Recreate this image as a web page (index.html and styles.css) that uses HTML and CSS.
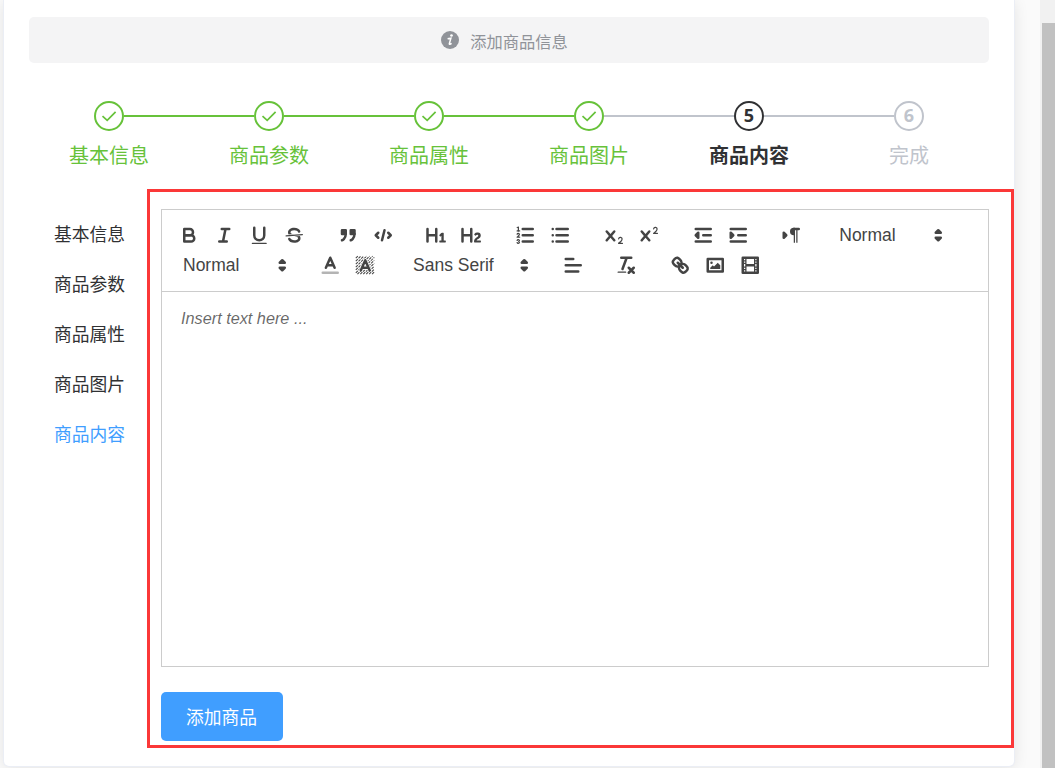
FILE: index.html
```html
<!DOCTYPE html>
<html lang="zh-CN">
<head>
<meta charset="utf-8">
<title>添加商品</title>
<link rel="stylesheet" href="styles.css">
</head>
<body>
<div class="viewport">
<main class="card">
  <div class="alert">
    <svg class="alert-icon" viewBox="0 0 18 18"><circle cx="9" cy="9" r="9" fill="#909399"/><circle cx="10.5" cy="4.5" r="1.35" fill="#fff"/><path d="M6.6 7.7 L9.9 7.1 L8.3 12.9 Q8.2 14 10.6 12.3" fill="none" stroke="#fff" stroke-width="1.5"/></svg>
    <span>添加商品信息</span>
  </div>
  <div class="steps">
    <div class="step done"><div class="head"><span class="circle"><svg viewBox="0 0 16 16"><path d="M1.5 8.1 L6.2 12.4 L14.6 3.8"/></svg></span></div><div class="title">基本信息</div></div>
    <div class="step done"><div class="head"><span class="circle"><svg viewBox="0 0 16 16"><path d="M1.5 8.1 L6.2 12.4 L14.6 3.8"/></svg></span></div><div class="title">商品参数</div></div>
    <div class="step done"><div class="head"><span class="circle"><svg viewBox="0 0 16 16"><path d="M1.5 8.1 L6.2 12.4 L14.6 3.8"/></svg></span></div><div class="title">商品属性</div></div>
    <div class="step done last-done"><div class="head"><span class="circle"><svg viewBox="0 0 16 16"><path d="M1.5 8.1 L6.2 12.4 L14.6 3.8"/></svg></span></div><div class="title">商品图片</div></div>
    <div class="step current"><div class="head"><span class="circle">5</span></div><div class="title">商品内容</div></div>
    <div class="step"><div class="head"><span class="circle">6</span></div><div class="title">完成</div></div>
  </div>
  <div class="body">
    <nav class="tabs">
      <a>基本信息</a><a>商品参数</a><a>商品属性</a><a>商品图片</a><a class="active">商品内容</a>
    </nav>
    <section class="panel">
      <div class="toolbar">
        <div class="group">
          <button><svg class="q" viewBox="0 0 18 18"><path class="s" d="M5,4H9.5A2.5,2.5,0,0,1,12,6.5v0A2.5,2.5,0,0,1,9.5,9H5V4Z"/><path class="s" d="M5,9h5.5A2.5,2.5,0,0,1,13,11.5v0A2.5,2.5,0,0,1,10.5,14H5V9Z"/></svg></button>
          <button><svg class="q" viewBox="0 0 18 18"><path class="s" d="M7 4H13M5 14H11M8 14L10 4"/></svg></button>
          <button><svg class="q" viewBox="0 0 18 18"><path class="s" d="M5,3V9a4.012,4.012,0,0,0,4,4H9a4.012,4.012,0,0,0,4-4V3"/><rect class="f" height="1" rx=".5" width="12" x="3" y="15"/></svg></button>
          <button><svg class="q" viewBox="0 0 18 18"><path class="s t" d="M15.5 8.5L2.5 9.5"/><path class="f" d="M9.007,8C6.542,7.791,6,7.519,6,6.5,6,5.792,7.283,5,9,5c1.571,0,2.765.679,2.969,1.309a1,1,0,0,0,1.9-.617C13.356,4.106,11.354,3,9,3,6.2,3,4,4.538,4,6.5a3.2,3.2,0,0,0,.5,1.843Z"/><path class="f" d="M8.984,10C11.457,10.208,12,10.479,12,11.5c0,0.708-1.283,1.5-3,1.5-1.571,0-2.765-.679-2.969-1.309a1,1,0,1,0-1.9.617C4.644,13.894,6.646,15,9,15c2.8,0,5-1.538,5-3.5a3.2,3.2,0,0,0-.5-1.843Z"/></svg></button>
        </div>
        <div class="group">
          <button><svg class="q" viewBox="0 0 18 18"><rect class="f s" height="3" width="3" x="4" y="5"/><rect class="f s" height="3" width="3" x="11" y="5"/><path class="f s" d="M7,8c0,4.031-3,5-3,5"/><path class="f s" d="M14,8c0,4.031-3,5-3,5"/></svg></button>
          <button><svg class="q" viewBox="0 0 18 18"><path class="s" d="M5 7L3 9L5 11M13 7L15 9L13 11M10 5L8 13"/></svg></button>
        </div>
        <div class="group">
          <button><svg class="q" viewBox="0 0 18 18"><path class="f" d="M10,4V14a1,1,0,0,1-2,0V10H3v4a1,1,0,0,1-2,0V4A1,1,0,0,1,3,4V8H8V4a1,1,0,0,1,2,0Zm6.06787,9.209H14.98975V7.59863a.54085.54085,0,0,0-.605-.60547h-.62744a1.01119,1.01119,0,0,0-.748.29688L11.645,8.56641a.5435.5435,0,0,0-.022.8584l.28613.30762a.53861.53861,0,0,0,.84717.0332l.09912-.08789a1.2137,1.2137,0,0,0,.2417-.35254h.02246s-.01123.30859-.01123.60547V13.209H12.041a.54085.54085,0,0,0-.605.60547v.43945a.54085.54085,0,0,0,.605.60547h4.02686a.54085.54085,0,0,0,.605-.60547v-.43945A.54085.54085,0,0,0,16.06787,13.209Z"/></svg></button>
          <button><svg class="q" viewBox="0 0 18 18"><path class="f" d="M16.73975,13.81445v.43945a.54085.54085,0,0,1-.605.60547H11.855a.58392.58392,0,0,1-.64893-.60547V14.0127c0-2.90527,3.39941-3.42187,3.39941-4.55469a.77675.77675,0,0,0-.84717-.78125,1.17684,1.17684,0,0,0-.83594.38477c-.2749.26367-.561.374-.85791.13184l-.4292-.34082c-.30811-.24219-.38525-.51758-.1543-.81445a2.97155,2.97155,0,0,1,2.45361-1.17676,2.45393,2.45393,0,0,1,2.68408,2.40918c0,2.45312-3.1792,2.92676-3.27832,3.93848h2.79443A.54085.54085,0,0,1,16.73975,13.81445ZM9,3A.99974.99974,0,0,0,8,4V8H3V4A1,1,0,0,0,1,4V14a1,1,0,0,0,2,0V10H8v4a1,1,0,0,0,2,0V4A.99974.99974,0,0,0,9,3Z"/></svg></button>
        </div>
        <div class="group">
          <button><svg class="q" viewBox="0 0 18 18"><path class="s" d="M7 4H15M7 9H15M7 14H15"/><path class="s t" d="M2.5 5.5H4.5"/><path class="f" d="M3.5,6A0.5,0.5,0,0,1,3,5.5V3.085l-0.276.138A0.5,0.5,0,0,1,2.053,3c-0.124-.247-0.023-0.324.224-0.447l1-.5A0.5,0.5,0,0,1,4,2.5v3A0.5,0.5,0,0,1,3.5,6Z"/><path class="s t" d="M4.5,10.5h-2c0-.234,1.85-1.076,1.85-2.234A0.959,0.959,0,0,0,2.5,8.156"/><path class="s t" d="M2.5,14.846a0.959,0.959,0,0,0,1.85-.109A0.7,0.7,0,0,0,3.75,14a0.688,0.688,0,0,0,.6-0.736,0.959,0.959,0,0,0-1.85-.109"/></svg></button>
          <button><svg class="q" viewBox="0 0 18 18"><path class="s" d="M6 4H15M6 9H15M6 14H15M3 4H3M3 9H3M3 14H3"/></svg></button>
        </div>
        <div class="group">
          <button><svg class="q" viewBox="0 0 18 18"><path class="f" d="M15.5,15H13.861a3.858,3.858,0,0,0,1.914-2.975,1.8,1.8,0,0,0-1.6-1.751A1.921,1.921,0,0,0,12.021,11.7a0.50013,0.50013,0,1,0,.957.291h0a0.914,0.914,0,0,1,1.053-.725,0.81,0.81,0,0,1,.744.762c0,1.076-1.16971,1.86982-1.93971,2.43082A1.45639,1.45639,0,0,0,12,15.5a0.5,0.5,0,0,0,.5.5h3A0.5,0.5,0,0,0,15.5,15Z"/><path class="f" d="M9.65,5.241a1,1,0,0,0-1.409.108L6,7.964,3.759,5.349A1,1,0,0,0,2.192,6.59178Q2.21541,6.6213,2.241,6.649L4.684,9.5,2.241,12.35A1,1,0,0,0,3.71,13.70722q0.02557-.02768.049-0.05722L6,11.036,8.241,13.65a1,1,0,1,0,1.567-1.24277Q9.78459,12.3777,9.759,12.35L7.316,9.5,9.759,6.651A1,1,0,0,0,9.65,5.241Z"/></svg></button>
          <button><svg class="q" viewBox="0 0 18 18"><path class="f" d="M15.5,7H13.861a4.015,4.015,0,0,0,1.914-2.975,1.8,1.8,0,0,0-1.6-1.751A1.922,1.922,0,0,0,12.021,3.7a0.5,0.5,0,1,0,.957.291,0.917,0.917,0,0,1,1.053-.725,0.81,0.81,0,0,1,.744.762c0,1.077-1.164,1.925-1.934,2.486A1.423,1.423,0,0,0,12,7.5a0.5,0.5,0,0,0,.5.5h3A0.5,0.5,0,0,0,15.5,7Z"/><path class="f" d="M9.65,5.241a1,1,0,0,0-1.409.108L6,7.964,3.759,5.349A1,1,0,0,0,2.192,6.59178Q2.21541,6.6213,2.241,6.649L4.684,9.5,2.241,12.35A1,1,0,0,0,3.71,13.70722q0.02557-.02768.049-0.05722L6,11.036,8.241,13.65a1,1,0,1,0,1.567-1.24277Q9.78459,12.3777,9.759,12.35L7.316,9.5,9.759,6.651A1,1,0,0,0,9.65,5.241Z"/></svg></button>
        </div>
        <div class="group">
          <button><svg class="q" viewBox="0 0 18 18"><path class="s" d="M3 14H15M3 4H15M9 9H15"/><path class="f s" d="M5 7V11L3 9Z"/></svg></button>
          <button><svg class="q" viewBox="0 0 18 18"><path class="s" d="M3 14H15M3 4H15M9 9H15"/><path class="f s" d="M3 7V11L5 9Z"/></svg></button>
        </div>
        <div class="group">
          <button><svg class="q" viewBox="0 0 18 18"><path class="f s" d="M3 11L5 9L3 7Z"/><path class="s" d="M15 4H11"/><path class="f" d="M11,3a3,3,0,0,0,0,6h1V3H11Z"/><rect class="f" height="11" width="1" x="11" y="4"/><rect class="f" height="11" width="1" x="13" y="4"/></svg></button>
        </div>
        <div class="group">
          <div class="picker"><span>Normal</span><svg class="q" viewBox="0 0 18 18"><path class="f s" d="M7 11L9 13L11 11ZM7 7L9 5L11 7Z"/></svg></div>
        </div>
        <div class="group">
          <div class="picker"><span>Normal</span><svg class="q" viewBox="0 0 18 18"><path class="f s" d="M7 11L9 13L11 11ZM7 7L9 5L11 7Z"/></svg></div>
        </div>
        <div class="group">
          <button><svg class="q" viewBox="0 0 18 18"><path class="s pale" d="M3 15H15"/><path class="s" d="M5.5 11L9 3L12.5 11M11.63 9H6.38"/></svg></button>
          <button><svg class="q" viewBox="0 0 18 18"><path class="hatch" d="M.5 2.5L2.5 .5M.5 5.2L5.2 .5M.5 7.9L7.9 .5M.5 10.6L10.6 .5M.5 13.3L13.3 .5M.5 16L16 .5M2 17.2L17.5 1.7M4.7 17.2L17.5 4.4M7.4 17.2L17.5 7.1M10.1 17.2L17.5 9.8M12.8 17.2L17.5 12.5M15.5 17.2L17.5 15.2" transform="translate(1 1.2) scale(.87)"/><path class="halo" d="M5.5 13L9 5L12.5 13M11.63 11H6.38"/><path class="s" d="M5.5 13L9 5L12.5 13M11.63 11H6.38"/></svg></button>
        </div>
        <div class="group">
          <div class="picker font"><span>Sans Serif</span><svg class="q" viewBox="0 0 18 18"><path class="f s" d="M7 11L9 13L11 11ZM7 7L9 5L11 7Z"/></svg></div>
        </div>
        <div class="group">
          <button><svg class="q" viewBox="0 0 18 18"><path class="s" d="M3 9H15M3 14H13M3 4H9"/></svg></button>
        </div>
        <div class="group">
          <button><svg class="q" viewBox="0 0 18 18"><path class="s" d="M5 3H13M6 12L9.35 3M11 11L15 15M15 11L11 15"/><rect class="f" height="1" rx=".5" width="7" x="2" y="14"/></svg></button>
        </div>
        <div class="group">
          <button><svg class="q" viewBox="0 0 18 18"><path class="s" d="M7 7L11 11"/><path class="s" d="M8.9,4.577a3.476,3.476,0,0,1,.36,4.679A3.476,3.476,0,0,1,4.577,8.9C3.185,7.5,2.035,6.4,4.217,4.217S7.5,3.185,8.9,4.577Z"/><path class="s" d="M13.423,9.1a3.476,3.476,0,0,0-4.679-.36,3.476,3.476,0,0,0,.36,4.679c1.392,1.392,2.5,2.542,4.679.36S14.815,10.5,13.423,9.1Z"/></svg></button>
          <button><svg class="q" viewBox="0 0 18 18"><rect class="s" height="10" width="12" x="3" y="4"/><circle class="f" cx="6" cy="7" r="1"/><path class="f" d="M5 12V11L7 9L8 10L11 7L13 9V12Z"/></svg></button>
          <button><svg class="q" viewBox="0 0 18 18"><rect class="s" height="12" width="12" x="3" y="3"/><path class="f" d="M5 3h1v12h-1zM12 3h1v12h-1zM5 8h8v2h-8zM3 5h3v1h-3zM3 7h3v1h-3zM3 10h3v1h-3zM3 12h3v1h-3zM12 5h3v1h-3zM12 7h3v1h-3zM12 10h3v1h-3zM12 12h3v1h-3z"/></svg></button>
        </div>
      </div>
      <div class="editor">Insert text here ...</div>
      <button class="submit">添加商品</button>
    </section>
  </div>
</main>
<div class="scrollbar"><div class="thumb"></div></div>
</div>
</body>
</html>
```
FILE: styles.css
```css
* { box-sizing: border-box; }
body { margin: 0; background: #fafafa; font-family: "Noto Sans", "Noto Sans CJK SC", sans-serif; color: #303133; }
button { border: 0; padding: 0; background: none; font: inherit; color: inherit; }
svg { display: block; flex: none; }

.viewport { height: 768px; display: flex; justify-content: space-between; overflow: hidden; padding-left: 4px; }
.card { width: 1010px; height: 766px; padding: 17px 0 0 25px; background: #fff; border-radius: 0 0 5px 5px; box-shadow: 0 0 0 1px #ebeef5, 0 2px 15px rgba(0, 0, 0, .1); }
.scrollbar { width: 15px; padding: 23px 0 0 2px; background: #f1f1f1; }
.thumb { height: 745px; background: #c1c1c1; }

.alert { width: 960px; height: 46px; display: flex; justify-content: center; align-items: center; gap: 11px; background: #f4f4f5; border-radius: 5px; color: #909399; font-size: 16.25px; line-height: 24px; padding: 4px 9px 0 0; }
.alert-icon { width: 18px; height: 18px; margin-top: -5px; }

.steps { display: flex; width: 960px; margin-top: 38px; }
.step { width: 160px; text-align: center; color: #c0c4cc; --line: #c0c4cc; }
.head { display: flex; align-items: center; height: 30px; }
.head::before, .head::after { content: ""; flex: 1; height: 2px; background: var(--line); }
.circle { width: 30px; height: 30px; border: 2px solid currentColor; border-radius: 50%; display: flex; align-items: center; justify-content: center; padding-bottom: 2px; font: bold 18px/1 "Open Sans", "Noto Sans", sans-serif; }
.circle svg { width: 16px; height: 16px; margin-top: 1px; fill: none; stroke: currentColor; stroke-width: 1.7; }
.title { font-size: 20px; line-height: 50px; height: 48px; }
.done { color: #67c23a; --line: #67c23a; }
.last-done .head::after { background: #c0c4cc; }
.step:first-child .head::before, .step:last-child .head::after { background: none; }
.current { color: #303133; }
.current .title { font-weight: 700; }

.body { display: flex; margin-top: 10px; }
.tabs { width: 118px; padding: 20px 0 0 25px; display: flex; flex-direction: column; font-size: 17.75px; line-height: 50px; }
.tabs a { white-space: nowrap; }
.tabs .active { color: #409eff; }
.panel { width: 867px; height: 559px; border: 3px solid #fb3838; padding: 17px 22px 0 11px; }

.toolbar { width: 828px; height: 83px; border: 1px solid #ccc; padding: 10px; display: flex; flex-wrap: wrap; align-content: flex-start; font-family: "Liberation Sans", Arial, sans-serif; color: #444; }
.group { display: flex; margin-right: 18.75px; height: 30px; }
.group button { width: 35px; height: 30px; padding: 3.75px 6.75px 3.75px 5.75px; }
.q { width: 22.5px; height: 22.5px; }
.s { fill: none; stroke: #444; stroke-width: 2; stroke-linecap: round; stroke-linejoin: round; }
.f { fill: #444; }
.f.s { fill: #444; }
.s.t { stroke-width: 1; }
.pale { opacity: .4; }
.hatch { fill: none; stroke: #444; stroke-width: .95; stroke-dasharray: 2.6 .9; }
.halo { fill: none; stroke: #fff; stroke-width: 3.2; stroke-linejoin: round; }
.picker { width: 122.5px; height: 30px; padding: 0 1.5px 0 11px; display: flex; justify-content: space-between; align-items: center; font-size: 17.5px; line-height: 30px; }
.font { width: 135px; }
.editor { width: 828px; height: 375px; border: 1px solid #ccc; border-top: 0; padding: 15px 19px; font: italic 16.25px/23px "Liberation Sans", Arial, sans-serif; color: rgba(0, 0, 0, .6); }
.panel .submit { display: block; width: 122px; height: 49px; margin-top: 25px; padding-right: 1px; border-radius: 5px; background: #409eff; color: #fff; font-size: 17.75px; line-height: 48px; }
```
